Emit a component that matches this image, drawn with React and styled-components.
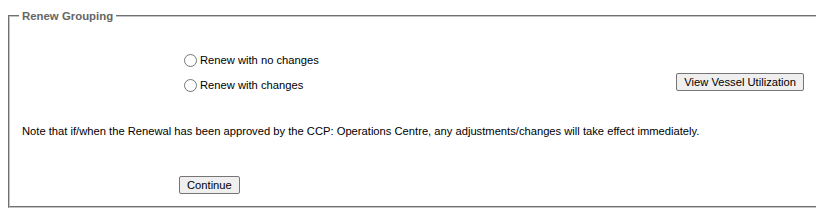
import React from "react";
import styled, { createGlobalStyle } from "styled-components";

const GlobalStyle = createGlobalStyle`
  body {
    margin: 0;
    background: #ffffff;
    font-family: "Liberation Sans", Arial, sans-serif;
    font-size: 11.2px;
    color: #000;
    overflow: hidden;
  }
`;

const Page = styled.div`
  padding: 10px 0 0 8px;
  width: 840px;
`;

const Fieldset = styled.fieldset`
  margin: 0;
  padding: 0 12px 10px 12px;
  border: 2px groove #c4c4c4;
  border-right: none;
  height: 198px;
  box-sizing: border-box;
`;

const Legend = styled.legend`
  padding: 0 3px;
  margin-left: -3px;
  font-weight: bold;
  color: #666666;
  font-size: 11.4px;
`;

const OptionsRow = styled.div`
  display: flex;
  align-items: flex-end;
  padding-top: 28px;
  width: 782px;
`;

const Options = styled.div`
  display: flex;
  flex-direction: column;
  gap: 5px;
  margin-left: 162px;
  flex: 1;
`;

const OptionLabel = styled.label`
  display: flex;
  align-items: center;
  height: 20px;
`;

const Radio = styled.input.attrs({ type: "radio" })`
  margin: 0 3px 0 0;
  width: 13px;
  height: 13px;
`;

const Button = styled.button`
  font-family: "Liberation Sans", Arial, sans-serif;
  font-size: 11.2px;
  color: #000;
  background: #efefef;
  border: 1px solid #767676;
  border-radius: 2px;
  padding: 1px 7px;
  height: 18px;
  margin-bottom: ${(p) => p.mb || "0"};
  margin-left: ${(p) => p.ml || "0"};
`;

const Note = styled.p`
  margin: 30px 0 0 0;
`;

const Footer = styled.div`
  padding-top: 39px;
`;

export default function App() {
  return (
    <>
      <GlobalStyle />
      <Page>
        <Fieldset>
          <Legend>Renew Grouping</Legend>
          <OptionsRow>
            <Options>
              <OptionLabel>
                <Radio name="renew" />
                Renew with no changes
              </OptionLabel>
              <OptionLabel>
                <Radio name="renew" />
                Renew with changes
              </OptionLabel>
            </Options>
            <Button mb="4px">View Vessel Utilization</Button>
          </OptionsRow>
          <Note>
            Note that if/when the Renewal has been approved by the CCP: Operations Centre, any
            adjustments/changes will take effect immediately.
          </Note>
          <Footer>
            <Button ml="157px">Continue</Button>
          </Footer>
        </Fieldset>
      </Page>
    </>
  );
}
